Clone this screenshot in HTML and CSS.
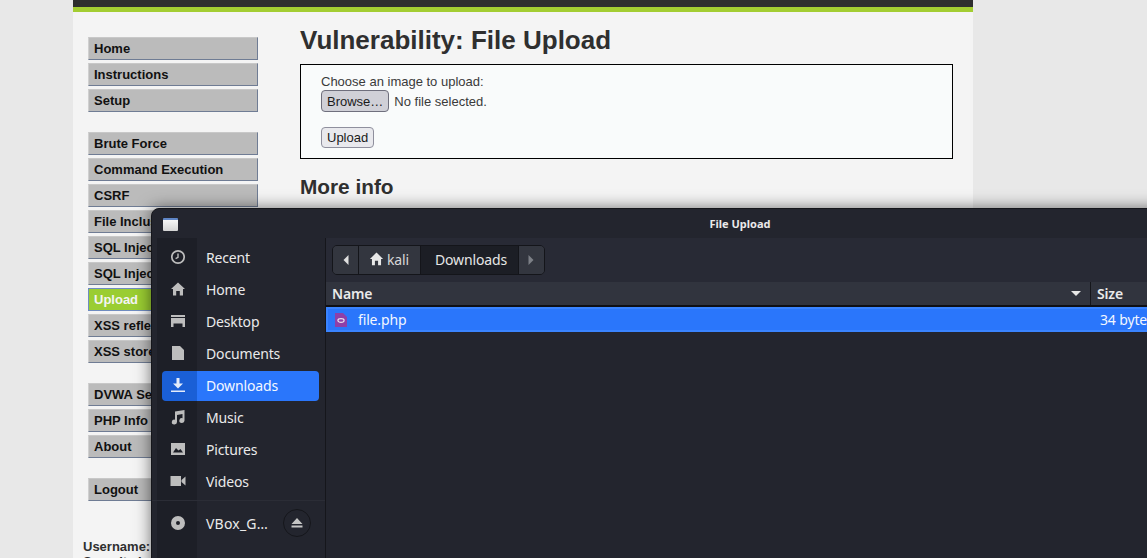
FILE: index.html
```html
<!DOCTYPE html>
<html lang="en">

<head>
    <meta charset="UTF-8">
    <meta name="viewport" content="width=device-width, initial-scale=1.0">
    <title>Vulnerability: File Upload</title>
    <link rel="stylesheet" href="styles.css">
</head>

<body>

    <div id="container">
        <div id="header"></div>

        <div id="main">
            <div id="menu">
                <ul class="menu-group">
                    <li>Home</li>
                    <li>Instructions</li>
                    <li>Setup</li>
                </ul>
                <ul class="menu-group">
                    <li>Brute Force</li>
                    <li>Command Execution</li>
                    <li>CSRF</li>
                    <li>File Inclusion</li>
                    <li>SQL Injection</li>
                    <li>SQL Injection (Blind)</li>
                    <li class="selected">Upload</li>
                    <li>XSS reflected</li>
                    <li>XSS stored</li>
                </ul>
                <ul class="menu-group">
                    <li>DVWA Security</li>
                    <li>PHP Info</li>
                    <li>About</li>
                </ul>
                <ul class="menu-group">
                    <li>Logout</li>
                </ul>
                <div class="user-info">
                    <b>Username:</b> admin<br>
                    <b>Security Level:</b> low
                </div>
            </div>

            <div id="content">
                <h1>Vulnerability: File Upload</h1>
                <div class="vuln-box">
                    <div>Choose an image to upload:</div>
                    <div class="file-row">
                        <button class="btn btn-browse">Browse…</button>
                        <span>No file selected.</span>
                    </div>
                    <button class="btn">Upload</button>
                </div>
                <h2>More info</h2>
            </div>
        </div>
    </div>

    <div id="dialog">
        <div class="titlebar">
            <span class="win-icon"></span>
            <span class="win-title">File Upload</span>
        </div>
        <div class="dialog-body">
            <div class="places">
                <div class="place">
                    <span class="place-icon">
                        <svg width="16" height="16" viewBox="0 0 16 16"><circle cx="8" cy="8" r="6.2" fill="none" stroke="#bdbdbd" stroke-width="1.7"/><path d="M8 4.6V8.4L5.6 9.6" fill="none" stroke="#bdbdbd" stroke-width="1.4"/></svg>
                    </span>
                    <span>Recent</span>
                </div>
                <div class="place">
                    <span class="place-icon">
                        <svg width="16" height="16" viewBox="0 0 16 16"><path d="M8 1.600L15 8H13V14.400H9.800V10H6.200V14.400H3V8H1Z" fill="#bdbdbd"/></svg>
                    </span>
                    <span>Home</span>
                </div>
                <div class="place">
                    <span class="place-icon">
                        <svg width="16" height="16" viewBox="0 0 16 16"><path d="M1 2H15V4H1ZM1 5H15V14H12.500V10.500H3.500V14H1Z" fill="#bdbdbd"/></svg>
                    </span>
                    <span>Desktop</span>
                </div>
                <div class="place">
                    <span class="place-icon">
                        <svg width="16" height="16" viewBox="0 0 16 16"><path d="M2 1H10L14 5V15H2Z" fill="#bdbdbd"/></svg>
                    </span>
                    <span>Documents</span>
                </div>
                <div class="place active">
                    <span class="place-icon">
                        <svg width="16" height="16" viewBox="0 0 16 16"><path d="M6.500 1H9.500V6.500H13L8 11.500L3 6.500H6.500ZM1 13.500H15V15H1Z" fill="#e4ecfa"/></svg>
                    </span>
                    <span>Downloads</span>
                </div>
                <div class="place">
                    <span class="place-icon">
                        <svg width="16" height="16" viewBox="0 0 16 16"><path d="M5 2.500L14.500 1V11.500A2.600 2.400 0 1 1 12.500 9.200V5L7 5.900V13A2.600 2.400 0 1 1 5 10.700Z" fill="#bdbdbd"/></svg>
                    </span>
                    <span>Music</span>
                </div>
                <div class="place">
                    <span class="place-icon">
                        <svg width="16" height="16" viewBox="0 0 16 16"><path fill-rule="evenodd" d="M1 2H15V14H1ZM3 11.500H13L10.500 8L8.500 9.500L6 7Z" fill="#bdbdbd"/></svg>
                    </span>
                    <span>Pictures</span>
                </div>
                <div class="place">
                    <span class="place-icon">
                        <svg width="16" height="16" viewBox="0 0 16 16"><path d="M0.500 3H11V13H0.500ZM11.500 7L15.500 3.500V12.500L11.500 9Z" fill="#bdbdbd"/></svg>
                    </span>
                    <span>Videos</span>
                </div>
                <div class="place-sep"></div>
                <div class="place">
                    <span class="place-icon">
                        <svg width="16" height="16" viewBox="0 0 16 16"><path fill-rule="evenodd" d="M8 1A7 7 0 1 1 8 15A7 7 0 1 1 8 1ZM8 6A2 2 0 1 0 8 10A2 2 0 1 0 8 6Z" fill="#bdbdbd"/></svg>
                    </span>
                    <span class="vbox-label">VBox_G…</span>
                    <span class="eject">
                        <svg width="14" height="14" viewBox="0 0 14 14"><path d="M7 2L12.500 8H1.500ZM1.500 9.500H12.500V11.500H1.500Z" fill="#c4c4c4"/></svg>
                    </span>
                </div>
            </div>

            <div class="browser">
                <div class="pathbar-row">
                    <div class="pathbar">
                        <span class="path-btn path-arrow">
                            <svg width="6" height="10" viewBox="0 0 6 10"><path d="M5.500 0V10L0.500 5Z" fill="#e0e0e0"/></svg>
                        </span>
                        <span class="path-btn path-home">
                            <svg width="15" height="14" viewBox="0 0 16 16"><path d="M8 0.600L15.500 8H13.200V15H9.800V10H6.200V15H2.800V8H0.500Z" fill="#e8e8e8"/></svg>
                            kali
                        </span>
                        <span class="path-btn path-current">Downloads</span>
                        <span class="path-btn path-arrow">
                            <svg width="6" height="10" viewBox="0 0 6 10"><path d="M0.500 0V10L5.500 5Z" fill="#7d8087"/></svg>
                        </span>
                    </div>
                </div>
                <div class="list-head">
                    <div class="col-name">
                        <span>Name</span>
                        <svg width="10" height="5" viewBox="0 0 10 5"><path d="M0 0H10L5 5Z" fill="#e6e6e6"/></svg>
                    </div>
                    <div class="col-size">Size</div>
                </div>
                <div class="file-item">
                    <div class="file-name">
                        <svg width="12" height="14" viewBox="0 0 12 14"><path d="M0 0H8L12 4V14H0Z" fill="#8e3fa8"/><ellipse cx="6" cy="7.500" rx="3.100" ry="1.800" fill="none" stroke="#eadff0" stroke-width="1.200"/></svg>
                        <span>file.php</span>
                    </div>
                    <div class="file-size">34 bytes</div>
                </div>
            </div>
        </div>
    </div>

</body>

</html>
```

FILE: styles.css
```css
html, body {
    height: 100%;
}

body {
    margin: 0;
    background-color: #e8e8e8;
    font-family: "Liberation Sans", Arial, sans-serif;
    font-size: 13px;
    color: #2f2f2f;
    overflow: hidden;
}

#container {
    width: 900px;
    margin-left: 73px;
    height: 558px;
    background-color: #f4f4f4;
    overflow: hidden;
}

#header {
    height: 7px;
    background-color: #2e2e2e;
    border-bottom: 5px solid #a3cd32;
}

#main {
    display: flex;
    padding: 25px 20px 0 15px;
}

#menu {
    width: 170px;
    flex-shrink: 0;
}

.menu-group {
    list-style: none;
    margin: 0 0 20px;
    padding: 0;
}

.menu-group li {
    box-sizing: border-box;
    height: 23px;
    margin-bottom: 3px;
    padding-left: 5px;
    background-color: #bbb;
    border: 1px solid #c8c8c8;
    border-bottom-color: #6f7c94;
    border-right-color: #6f7c94;
    border-left-color: #d0d0d0;
    font-weight: bold;
    line-height: 21px;
    color: #111;
    white-space: nowrap;
    overflow: hidden;
}

.menu-group li.selected {
    background-color: #9acd32;
    border-color: #6f8cc0;
    color: #f4f4f4;
}

.user-info {
    margin: 38px 0 0 -5px;
    line-height: 15px;
    white-space: nowrap;
}

#content {
    flex: 1;
    margin-left: 42px;
}

h1 {
    margin: -12px 0 9px;
    font-size: 26px;
    line-height: 30px;
    color: #2f2f2f;
}

.vuln-box {
    box-sizing: border-box;
    height: 95px;
    padding: 9px 20px 0;
    background-color: #f9fbfb;
    border: 1px solid #000;
    line-height: 15px;
    color: #3a3a3a;
}

.file-row {
    display: flex;
    align-items: center;
    gap: 5px;
    margin-top: 1px;
    margin-bottom: 15px;
}

.btn {
    box-sizing: border-box;
    height: 21px;
    padding: 0 5px;
    background-color: #e9e9ed;
    border: 1px solid #8f8f9d;
    border-radius: 4px;
    font-family: inherit;
    font-size: 13px;
    color: #1a1a1a;
}

.btn-browse {
    height: 22px;
    background-color: #d0d0d7;
    border-color: #6f6f7d;
}

h2 {
    margin: 16px 0 0;
    font-size: 20.8px;
    line-height: 24px;
    color: #2f2f2f;
}

#dialog {
    position: absolute;
    left: 151px;
    top: 208px;
    width: 1176px;
    height: 420px;
    background-color: #23252e;
    border: 1px solid #15161b;
    border-radius: 8px 8px 0 0;
    box-shadow: 0 0 16px rgba(0, 0, 0, 0.55);
    font-family: "Noto Sans", sans-serif;
    font-size: 14px;
    letter-spacing: -0.15px;
    color: #eaeaea;
}

.titlebar {
    height: 29px;
    display: flex;
    align-items: center;
    justify-content: center;
    position: relative;
}

.win-title {
    font-size: 11px;
    font-weight: bold;
    letter-spacing: 0;
}

.win-icon {
    position: absolute;
    left: 11px;
    top: 9px;
    width: 15px;
    height: 13px;
    background: linear-gradient(#f6f6f6, #d4d4d4);
    border-top: 2px solid #5f86c6;
    box-sizing: border-box;
    border-radius: 1px;
}

.dialog-body {
    display: flex;
}

.places {
    width: 173px;
    height: 390px;
    padding-top: 5px;
    border-right: 1px solid #15161b;
    flex-shrink: 0;
    background: linear-gradient(90deg, #23252e 0, #23252e 5px, #1d1f27 5px, #1d1f27 45px, #23252e 45px);
}

.place {
    display: flex;
    align-items: center;
    box-sizing: border-box;
    height: 30px;
    padding-bottom: 2px;
    margin: 0 6px 2px 10px;
    border-radius: 4px;
}

.place.active {
    background: linear-gradient(90deg, #1a5fd6 0, #1a5fd6 35px, #2a76fb 35px);
    color: #f4f8ff;
}

.place-icon {
    width: 32px;
    margin-right: 12px;
    display: flex;
    justify-content: center;
    flex-shrink: 0;
}

.place-sep {
    height: 1px;
    margin: 3px 0 8px;
    background-color: #2b2d36;
}

.vbox-label {
    letter-spacing: 0.2px;
}

.eject {
    width: 26px;
    height: 26px;
    margin-left: auto;
    margin-right: 8px;
    border: 1px solid #15161b;
    border-radius: 50%;
    display: flex;
    align-items: center;
    justify-content: center;
}

.browser {
    flex: 1;
    background-color: #23252e;
}

.pathbar-row {
    height: 37px;
    padding-top: 7px;
    background-color: #282a35;
}

.pathbar {
    display: inline-flex;
    box-sizing: border-box;
    height: 30px;
    margin-left: 6px;
    border: 1px solid #14151a;
    border-radius: 5px;
    overflow: hidden;
}

.path-btn {
    display: flex;
    align-items: center;
    gap: 3px;
    padding: 0 11px 2px 10px;
    background-color: #33363f;
    border-right: 1px solid #14151a;
    color: #d8d8d8;
}

.path-arrow {
    box-sizing: border-box;
    width: 26px;
    padding: 0 0 1px;
    justify-content: center;
}

.path-arrow:last-child {
    border-right: 0;
    width: 25px;
}

.path-current {
    background-color: #1c1e25;
    color: #e6e6e6;
    padding: 0 11px 2px 14px;
}

.list-head {
    display: flex;
    height: 23px;
    background-color: #31343e;
    border-bottom: 2px solid #0f1014;
    font-weight: 600;
}

.col-name {
    display: flex;
    align-items: center;
    justify-content: space-between;
    width: 749px;
    padding: 0 9px 0 6px;
    border-right: 1px solid #15161b;
}

.col-size {
    padding-left: 6px;
    line-height: 23px;
}

.file-item {
    display: flex;
    align-items: center;
    height: 25px;
    background-color: #2a76fb;
    box-shadow: inset 0 0 0 2px #3a84ff;
    color: #f2f6ff;
}

.file-name {
    display: flex;
    align-items: center;
    gap: 11px;
    width: 765px;
    padding-left: 9px;
    flex-shrink: 0;
}
```
